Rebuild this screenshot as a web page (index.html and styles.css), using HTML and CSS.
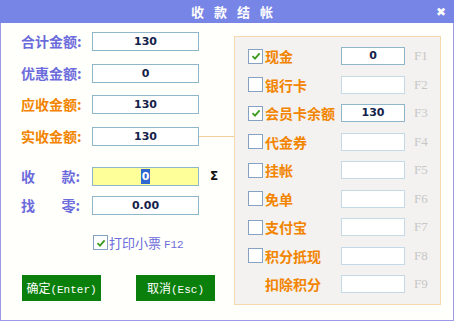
FILE: index.html
```html
<!DOCTYPE html>
<html lang="zh-CN">
<head>
    <meta charset="UTF-8">
    <title>收款结帐</title>
    <link rel="stylesheet" href="styles.css">
</head>
<body>
    <div class="window">
        <div class="titlebar">
            <span class="title">收款结帐</span>
            <span class="close">✖</span>
        </div>

        <div class="content">
            <!-- left: amounts -->
            <div class="left">
                <div class="row">
                    <span class="label blue">合计金额:</span>
                    <div class="box">130</div>
                </div>
                <div class="row">
                    <span class="label blue">优惠金额:</span>
                    <div class="box">0</div>
                </div>
                <div class="row">
                    <span class="label orange">应收金额:</span>
                    <div class="box">130</div>
                </div>
                <div class="row">
                    <span class="label orange">实收金额:</span>
                    <div class="box link">130</div>
                </div>

                <div class="row pay">
                    <span class="label blue spread"><span>收</span><span>款:</span></span>
                    <div class="box yellow"><span class="sel">0</span></div>
                    <span class="sigma">Σ</span>
                </div>
                <div class="row change">
                    <span class="label blue spread"><span>找</span><span>零:</span></span>
                    <div class="box">0.00</div>
                </div>

                <div class="print">
                    <span class="check on"><svg viewBox="0 0 10 10"><path d="M1.5 5.2 L4 7.6 L8.6 2.4" /></svg></span>
                    <span class="print-text">打印小票 <span class="key">F12</span></span>
                </div>

                <div class="buttons">
                    <button class="btn">确定<span class="mono">(Enter)</span></button>
                    <button class="btn">取消<span class="mono">(Esc)</span></button>
                </div>
            </div>

            <!-- right: payment methods -->
            <div class="panel">
                <div class="pay-row">
                    <span class="check on"><svg viewBox="0 0 10 10"><path d="M1.5 5.2 L4 7.6 L8.6 2.4" /></svg></span>
                    <span class="method">现金</span>
                    <div class="box small active">0</div>
                    <span class="fkey">F1</span>
                </div>
                <div class="pay-row">
                    <span class="check"></span>
                    <span class="method">银行卡</span>
                    <div class="box small"></div>
                    <span class="fkey">F2</span>
                </div>
                <div class="pay-row">
                    <span class="check on"><svg viewBox="0 0 10 10"><path d="M1.5 5.2 L4 7.6 L8.6 2.4" /></svg></span>
                    <span class="method">会员卡余额</span>
                    <div class="box small active">130</div>
                    <span class="fkey">F3</span>
                </div>
                <div class="pay-row">
                    <span class="check"></span>
                    <span class="method">代金券</span>
                    <div class="box small"></div>
                    <span class="fkey">F4</span>
                </div>
                <div class="pay-row">
                    <span class="check"></span>
                    <span class="method">挂帐</span>
                    <div class="box small"></div>
                    <span class="fkey">F5</span>
                </div>
                <div class="pay-row">
                    <span class="check"></span>
                    <span class="method">免单</span>
                    <div class="box small"></div>
                    <span class="fkey">F6</span>
                </div>
                <div class="pay-row">
                    <span class="check"></span>
                    <span class="method">支付宝</span>
                    <div class="box small"></div>
                    <span class="fkey">F7</span>
                </div>
                <div class="pay-row">
                    <span class="check"></span>
                    <span class="method">积分抵现</span>
                    <div class="box small"></div>
                    <span class="fkey">F8</span>
                </div>
                <div class="pay-row">
                    <span class="nocheck"></span>
                    <span class="method">扣除积分</span>
                    <div class="box small"></div>
                    <span class="fkey">F9</span>
                </div>
            </div>
        </div>
    </div>
</body>
</html>
```

FILE: styles.css
```css
* {
    margin: 0;
    padding: 0;
    box-sizing: border-box;
}

body {
    background-color: #ffffff;
    font-family: "Noto Sans CJK SC", sans-serif;
}

.window {
    width: 454px;
    height: 321px;
    background-color: #fffffb;
    border: 1px solid #9f9ae8;
    border-top: none;
}

.titlebar {
    height: 23px;
    background-color: #7786e6;
    display: flex;
    align-items: center;
    justify-content: center;
    position: relative;
    margin: 0 -1px;
}

.title {
    color: #ffffff;
    font-size: 13px;
    font-weight: bold;
    letter-spacing: 10px;
    margin-left: 20px;
}

.close {
    position: absolute;
    right: 8px;
    top: 5px;
    color: #ffffff;
    font-family: "DejaVu Sans", sans-serif;
    font-size: 12px;
    font-weight: bold;
}

.content {
    display: flex;
}

/* left column */
.left {
    width: 233px;
    padding: 9px 0 0 20px;
}

.row {
    display: flex;
    align-items: center;
    height: 19px;
    margin-bottom: 12.6px;
}

.row.pay {
    margin-top: 21px;
    margin-bottom: 10px;
}

.label {
    width: 71px;
    font-size: 14px;
    font-weight: bold;
    line-height: 19px;
}

.blue {
    color: #6b6bdc;
}

.orange {
    color: #f28400;
}

.spread {
    display: flex;
    justify-content: space-between;
    padding-right: 12px;
}

.box {
    width: 107px;
    height: 19px;
    border: 1px solid #8fb7c9;
    background-color: #ffffff;
    color: #15224a;
    font-family: "DejaVu Sans", sans-serif;
    font-weight: bold;
    font-size: 11px;
    line-height: 17px;
    text-align: center;
    position: relative;
}

.box.link::after {
    content: "";
    position: absolute;
    left: 106px;
    top: 8px;
    width: 35px;
    height: 1px;
    background-color: #f1cf9c;
}

.box.yellow {
    background-color: #ffff99;
}

.sel {
    background-color: #3168d0;
    color: #ffffff;
    padding: 1px 1px;
}

.sigma {
    margin-left: 11px;
    font-family: "DejaVu Sans", sans-serif;
    font-weight: bold;
    font-size: 12px;
    color: #111111;
}

.print {
    display: flex;
    align-items: center;
    margin: 20px 0 0 72px;
    height: 16px;
}

.print-text {
    color: #6b6bdc;
    font-size: 13px;
    margin-left: 1px;
}

.key {
    font-family: "Liberation Mono", monospace;
    font-size: 11px;
}

.check {
    width: 15px;
    height: 15px;
    border: 1px solid #86a2c2;
    background-color: #ffffff;
    display: inline-flex;
    align-items: center;
    justify-content: center;
    flex: none;
}

.check svg {
    width: 10px;
    height: 10px;
    fill: none;
    stroke: #3c9a1e;
    stroke-width: 1.8;
}

.nocheck {
    width: 15px;
    flex: none;
}

.buttons {
    display: flex;
    gap: 35px;
    margin-top: 24px;
    padding-left: 1px;
}

.btn {
    width: 79px;
    height: 26px;
    background-color: #0b7f0b;
    color: #ffffff;
    border: none;
    font-family: "Noto Sans CJK SC", sans-serif;
    font-size: 12px;
}

.mono {
    font-family: "Liberation Mono", monospace;
    font-size: 11px;
}

/* right panel */
.panel {
    margin-top: 13px;
    width: 207px;
    height: 269px;
    background-color: #f3f2f0;
    border: 1px solid #f5d8ae;
    padding: 10px 0 0 13px;
}

.pay-row {
    display: flex;
    align-items: center;
    height: 18px;
    margin-bottom: 10.5px;
}

.method {
    width: 76px;
    margin-left: 2px;
    color: #f28400;
    font-size: 14px;
    font-weight: bold;
    line-height: 18px;
}

.box.small {
    width: 64px;
    height: 18px;
    border-color: #c6d9e6;
    line-height: 16px;
}

.box.small.active {
    border-color: #8fb7c9;
}

.fkey {
    margin-left: 9px;
    font-family: "Liberation Serif", serif;
    font-size: 13px;
    color: #c7c7c7;
}
```
